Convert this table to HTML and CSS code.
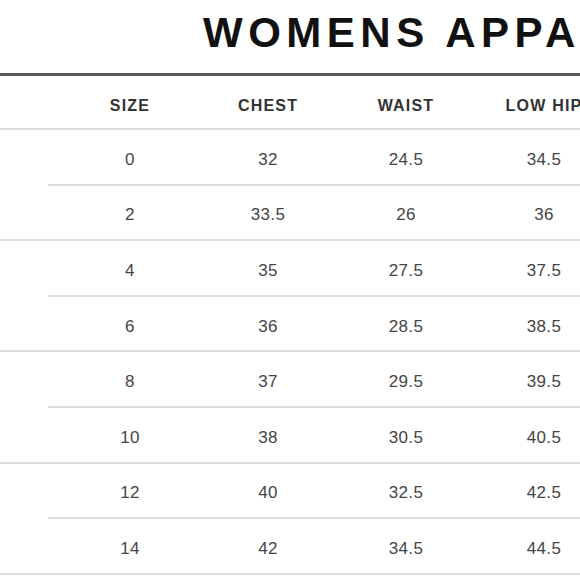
FILE: index.html
```html
<!DOCTYPE html>
<html>
<head>
<meta charset="utf-8">
<link rel="stylesheet" href="styles.css">
</head>
<body>
<div class="page">
  <div class="title">WOMENS APPAREL</div>
  <div class="row head">
    <div>SIZE</div><div>CHEST</div><div>WAIST</div><div>LOW HIP</div>
  </div>
  <div class="row inner"><div>0</div><div>32</div><div>24.5</div><div>34.5</div></div>
  <div class="row"><div>2</div><div>33.5</div><div>26</div><div>36</div></div>
  <div class="row inner"><div>4</div><div>35</div><div>27.5</div><div>37.5</div></div>
  <div class="row"><div>6</div><div>36</div><div>28.5</div><div>38.5</div></div>
  <div class="row inner"><div>8</div><div>37</div><div>29.5</div><div>39.5</div></div>
  <div class="row"><div>10</div><div>38</div><div>30.5</div><div>40.5</div></div>
  <div class="row inner"><div>12</div><div>40</div><div>32.5</div><div>42.5</div></div>
  <div class="row"><div>14</div><div>42</div><div>34.5</div><div>44.5</div></div>
</div>
</body>
</html>
```
FILE: styles.css
```css
html, body {
  margin: 0;
  padding: 0;
  background: #fff;
}
.page {
  width: 580px;
  height: 580px;
  overflow: hidden;
  font-family: "Liberation Sans", Arial, sans-serif;
}
.title {
  height: 73px;
  padding-left: 203px;
  font-size: 42px;
  line-height: 65px;
  font-weight: bold;
  letter-spacing: 5.5px;
  color: #111;
  white-space: nowrap;
  border-bottom: 3px solid #5a5a5a;
}
.row {
  box-sizing: border-box;
  display: grid;
  grid-template-columns: repeat(4, 138px);
  padding-left: 61px;
  padding-top: 6px;
  height: 55.6px;
  align-items: center;
  border-bottom: 2px solid #dcdcdc;
  font-size: 17px;
  letter-spacing: 0.4px;
  color: #454545;
  white-space: nowrap;
}
.row > div {
  text-align: center;
}
.row.head {
  height: 54px;
  padding-top: 7px;
  font-size: 16px;
  font-weight: bold;
  letter-spacing: 1.2px;
  color: #333;
}
.row.inner {
  margin-left: 48px;
  padding-left: 13px;
}
```
